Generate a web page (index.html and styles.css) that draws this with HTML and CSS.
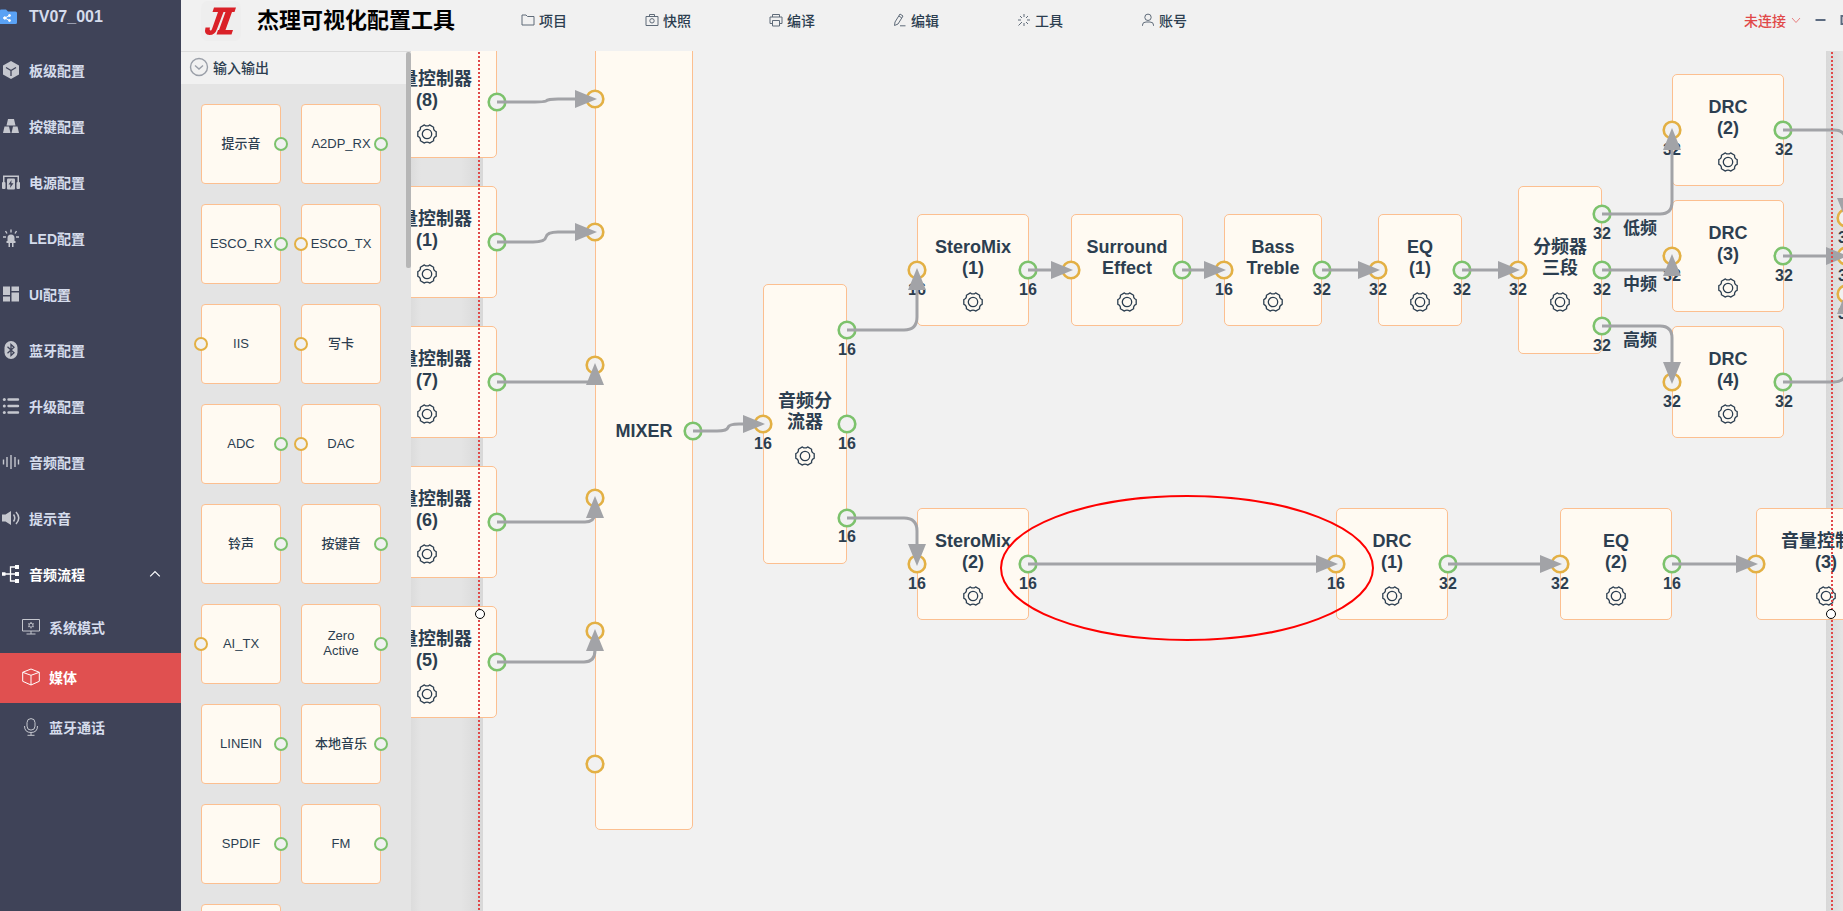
FILE: index.html
```html
<!DOCTYPE html>
<html lang="zh-CN">
<head>
<meta charset="utf-8">
<title>杰理可视化配置工具</title>
<link rel="stylesheet" href="styles.css">
</head>
<body>
<svg class="defs" aria-hidden="true">
  <symbol id="gear" viewBox="0 0 20 20"><path d="M19.2 12.3V7.7Q16.100 6.500 16.6 3.2L12.6.9Q10 3 7.4.9L3.4 3.2Q3.900 6.500.8 7.7V12.3Q3.900 13.500 3.4 16.8L7.4 19.1Q10 17 12.6 19.1L16.6 16.8Q16.100 13.500 19.2 12.3Z"/><circle cx="10" cy="10" r="4.700"/></symbol>
</svg>
<div class="app">
  <aside class="sidebar">
    <div class="project">
      <svg class="project-icon" viewBox="0 0 18 18"><path fill="#5aa2f5" d="M0 2.500Q0 1.500 1 1.500H6L8 3.500H15.500Q17 3.500 17 5V14.500Q17 16 15.500 16H0Z"/><g fill="#fff" stroke="#fff"><path fill="none" d="M9.500 7.500L5 10L9.500 12.500"/><circle cx="9.500" cy="7.500" r="1"/><circle cx="4.800" cy="10" r="1.200"/><circle cx="9.500" cy="12.500" r="1"/></g></svg>
      <span>TV07_001</span>
    </div>
    <nav class="nav">
      <a class="nav-item" href="#board"><svg class="icon" viewBox="0 0 18 18"><path fill="currentColor" d="M9 0L17 4.500V13.500L9 18L1 13.500V4.500Z"/><path fill="none" stroke="#3f4358" stroke-width="1.300" d="M4 6.500L9 9.500L14 6.500M9 9.500V15"/></svg>板级配置</a>
      <a class="nav-item" href="#key"><svg class="icon" viewBox="0 0 18 18"><path fill="currentColor" d="M6 2H12L13.500 8.500H4.500ZM2.500 9.500H7L8.500 16H1ZM11 9.500H15.500L17 16H9.500Z"/></svg>按键配置</a>
      <a class="nav-item" href="#power"><svg class="icon" viewBox="0 0 18 18"><g fill="currentColor"><path d="M1 2.500H17V9H15.500V4H2.500V9H1Z"/><rect x="0" y="9" width="3.500" height="7" rx="1"/><rect x="14.500" y="9" width="3.500" height="7" rx="1"/><rect x="5" y="5.500" width="8" height="11" rx="1"/></g><path fill="#3f4358" d="M9.500 7L6.500 11.500H8.500L8 15L11.500 10.300H9.300Z"/></svg>电源配置</a>
      <a class="nav-item" href="#led"><svg class="icon" viewBox="0 0 18 18"><path fill="currentColor" d="M5.500 12V9Q5.500 5.500 9 5.500T12.500 9V12H13.500V14H11.500V18H10V14H8V18H6.500V14H4.500V12Z"/><path stroke="currentColor" stroke-width="1.400" d="M9 .500V3.500M3.500 2L5 4.500M14.500 2L13 4.500M1 8H4M14 8H17"/></svg>LED配置</a>
      <a class="nav-item" href="#ui"><svg class="icon" viewBox="0 0 18 18"><path fill="currentColor" d="M1 1.500H8V10H1ZM9.500 1.500H17V6H9.500ZM9.500 7.500H17V16.500H9.500ZM1 11.500H8V16.500H1Z"/></svg>UI配置</a>
      <a class="nav-item" href="#bluetooth"><svg class="icon" viewBox="0 0 18 18"><rect x="2.500" y="0" width="13" height="18" rx="6.500" fill="currentColor"/><path fill="none" stroke="#3f4358" stroke-width="1.300" d="M5.500 5.800L12 11.700L9 14.500V3.500L12 6.300L5.500 12.200"/></svg>蓝牙配置</a>
      <a class="nav-item" href="#upgrade"><svg class="icon" viewBox="0 0 18 18"><path stroke="currentColor" stroke-width="2.400" stroke-linecap="round" d="M6.500 2.500H16M6.500 9H16M6.500 15.500H16"/><g fill="currentColor"><circle cx="2.300" cy="2.500" r="1.500"/><circle cx="2.300" cy="9" r="1.500"/><circle cx="2.300" cy="15.500" r="1.500"/></g></svg>升级配置</a>
      <a class="nav-item" href="#audio"><svg class="icon" viewBox="0 0 18 18"><path stroke="currentColor" stroke-width="1.400" d="M1.500 6.500V11.500M5 4V14M9 2V16M13 4V14M16.500 6.500V11.500"/></svg>音频配置</a>
      <a class="nav-item" href="#tone"><svg class="icon" viewBox="0 0 18 18"><path fill="currentColor" d="M0 5.500H3.500L9 2V16L3.500 12.500H0Z"/><path fill="none" stroke="currentColor" stroke-width="1.500" d="M11.500 5.500Q14 9 11.500 12.500M14 3Q19.500 9 14 15"/></svg>提示音</a>
      <a class="nav-item nav-item-open" href="#flow"><svg class="icon" viewBox="0 0 18 18"><path fill="none" stroke="currentColor" stroke-width="1.300" d="M2 9H15M15 2H8.500V16H15"/><path fill="currentColor" d="M0 7.300H3.500V10.700H0ZM13 0H17V4H13ZM13 7H17V11H13ZM13 14H17V18H13Z"/></svg>音频流程<svg class="caret" viewBox="0 0 10 10"><path d="M1 7L5 3L9 7"/></svg></a>
      <a class="sub-item" href="#system"><svg class="icon line" viewBox="0 0 18 18"><path d="M.500 1.500H17.500V13H.500ZM9 13V16M4.500 16H13.500"/><circle cx="9" cy="7.200" r="2"/><path d="M9 4V5M9 9.500V10.500M6.200 5.600L7 6.200M11 8.300L11.800 8.900M6.200 8.900L7 8.300M11 6.200L11.800 5.600"/></svg>系统模式</a>
      <a class="sub-item sub-item-active" href="#media"><svg class="icon line" viewBox="0 0 18 18"><path d="M9 1L17.300 4.300V13.300L9 17L.700 13.300V4.300ZM.700 4.300L9 7.300L17.300 4.300M9 7.300V17"/></svg>媒体</a>
      <a class="sub-item" href="#call"><svg class="icon line" viewBox="0 0 18 18"><rect x="5" y=".600" width="8" height="11.500" rx="4"/><path d="M2.500 8Q2.500 14.500 9 14.500T15.500 8M9 14.500V17.300M5.500 17.300H12.500"/></svg>蓝牙通话</a>
    </nav>
  </aside>
  <div class="content">
    <header class="topbar">
      <svg class="logo" viewBox="0 0 40 40"><rect width="40" height="40" rx="7" fill="#eeeeee"/><path fill="#da2128" d="M13 6.500H35L33.500 11H31L24.500 29H32L30.500 33.500H15.500L17 29H18L24.500 11H22.500L16 28Q14 34 8.500 34Q2.500 34 4.500 26.500H9Q8.200 29.500 9.500 29.500Q10.500 29.500 11 28L17 11H11.500Z"/></svg>
      <h1 class="title">杰理可视化配置工具</h1>
      <div class="menu">
        <button class="menu-item"><svg class="menu-icon" viewBox="0 0 14 14"><path d="M1 2H5L6.500 3.500H13V12H1Z"/></svg>项目</button>
        <button class="menu-item"><svg class="menu-icon" viewBox="0 0 14 14"><path d="M1 3.500H13V12.500H1ZM4.500 3.500V1.500H9.500V3.500"/><circle cx="7" cy="7.800" r="2.200"/></svg>快照</button>
        <button class="menu-item"><svg class="menu-icon" viewBox="0 0 14 14"><path d="M3.500 4V1.500H10.500V4M3.500 10.500H1V4H13V10.500H10.500M3.500 7.500H10.500V13H3.500Z"/></svg>编译</button>
        <button class="menu-item"><svg class="menu-icon" viewBox="0 0 14 14"><path d="M7 1L10 3L5 11L1.500 12.500L2 9ZM6 3L8.800 5M7 12.800H12.500"/></svg>编辑</button>
        <button class="menu-item"><svg class="menu-icon" viewBox="0 0 14 14"><path d="M7 1V4M7 10V13M1 7H4M10 7H13M3 3L5 5M11 3L9 5M11 11L9 9M5 9L1.500 12.500"/></svg>工具</button>
        <button class="menu-item"><svg class="menu-icon" viewBox="0 0 14 14"><circle cx="7" cy="4.300" r="3.200"/><path d="M1.500 12.800V12Q1.500 9 5 9H9Q12.500 9 12.500 12V12.800"/></svg>账号</button>
      </div>
      <div class="window-tools">
        <button class="status">未连接<svg class="status-caret" viewBox="0 0 10 10"><path d="M1 3L5 7.500L9 3"/></svg></button>
        <button class="window-button" aria-label="最小化"><svg viewBox="0 0 10 10"><path d="M0 5H10"/></svg></button>
        <button class="window-button" aria-label="还原"><svg viewBox="0 0 10 10"><path d="M1 1H9V9H1Z"/></svg></button>
      </div>
    </header>
    <div class="workspace">
      <section class="palette">
        <button class="palette-head"><svg class="fold" viewBox="0 0 20 20"><circle cx="10" cy="10" r="8.500"/><path d="M6 8.500L10 12L14 8.500"/></svg>输入输出</button>
        <ul class="palette-grid">
          <li class="block out">提示音</li><li class="block out">A2DP_RX</li>
          <li class="block out">ESCO_RX</li><li class="block in">ESCO_TX</li>
          <li class="block in">IIS</li><li class="block in">写卡</li>
          <li class="block out">ADC</li><li class="block in">DAC</li>
          <li class="block out">铃声</li><li class="block out">按键音</li>
          <li class="block in">AI_TX</li><li class="block out">Zero<br>Active</li>
          <li class="block out">LINEIN</li><li class="block out">本地音乐</li>
          <li class="block out">SPDIF</li><li class="block out">FM</li>
          <li class="block"></li>
        </ul>
        <div class="scroll-thumb"></div>
      </section>
      <main class="canvas">
        <div class="stage">
          <div class="margin-zone zone-left"></div>
          <div class="margin-zone zone-right"></div>
          <div class="node" style="--x:357px;--y:46px;--w:140px;--h:112px"><span>音量控制器<br>(8)</span><svg class="gear"><use href="#gear"/></svg></div>
          <div class="node" style="--x:357px;--y:186px;--w:140px;--h:112px"><span>音量控制器<br>(1)</span><svg class="gear"><use href="#gear"/></svg></div>
          <div class="node" style="--x:357px;--y:326px;--w:140px;--h:112px"><span>音量控制器<br>(7)</span><svg class="gear"><use href="#gear"/></svg></div>
          <div class="node" style="--x:357px;--y:466px;--w:140px;--h:112px"><span>音量控制器<br>(6)</span><svg class="gear"><use href="#gear"/></svg></div>
          <div class="node" style="--x:357px;--y:606px;--w:140px;--h:112px"><span>音量控制器<br>(5)</span><svg class="gear"><use href="#gear"/></svg></div>
          <div class="node plain" style="--x:595px;--y:32px;--w:98px;--h:798px">MIXER</div>
          <div class="node" style="--x:763px;--y:284px;--w:84px;--h:280px"><span>音频分<br>流器</span><svg class="gear"><use href="#gear"/></svg></div>
          <div class="node" style="--x:917px;--y:214px;--w:112px;--h:112px"><span>SteroMix<br>(1)</span><svg class="gear"><use href="#gear"/></svg></div>
          <div class="node" style="--x:1071px;--y:214px;--w:112px;--h:112px"><span>Surround<br>Effect</span><svg class="gear"><use href="#gear"/></svg></div>
          <div class="node" style="--x:1224px;--y:214px;--w:98px;--h:112px"><span>Bass<br>Treble</span><svg class="gear"><use href="#gear"/></svg></div>
          <div class="node" style="--x:1378px;--y:214px;--w:84px;--h:112px"><span>EQ<br>(1)</span><svg class="gear"><use href="#gear"/></svg></div>
          <div class="node" style="--x:1518px;--y:186px;--w:84px;--h:168px"><span>分频器<br>三段</span><svg class="gear"><use href="#gear"/></svg></div>
          <div class="node" style="--x:1672px;--y:74px;--w:112px;--h:112px"><span>DRC<br>(2)</span><svg class="gear"><use href="#gear"/></svg></div>
          <div class="node" style="--x:1672px;--y:200px;--w:112px;--h:112px"><span>DRC<br>(3)</span><svg class="gear"><use href="#gear"/></svg></div>
          <div class="node" style="--x:1672px;--y:326px;--w:112px;--h:112px"><span>DRC<br>(4)</span><svg class="gear"><use href="#gear"/></svg></div>
          <div class="node" style="--x:917px;--y:508px;--w:112px;--h:112px"><span>SteroMix<br>(2)</span><svg class="gear"><use href="#gear"/></svg></div>
          <div class="node" style="--x:1336px;--y:508px;--w:112px;--h:112px"><span>DRC<br>(1)</span><svg class="gear"><use href="#gear"/></svg></div>
          <div class="node" style="--x:1560px;--y:508px;--w:112px;--h:112px"><span>EQ<br>(2)</span><svg class="gear"><use href="#gear"/></svg></div>
          <div class="node" style="--x:1756px;--y:508px;--w:140px;--h:112px"><span>音量控制器<br>(3)</span><svg class="gear"><use href="#gear"/></svg></div>
          <svg class="wires">
            <defs>
              <marker id="arrow" markerUnits="userSpaceOnUse" markerWidth="22" markerHeight="18" refX="20" refY="9" orient="auto"><path fill="#a2a3a7" d="M0 0L22 9L0 18Z"/></marker>
            </defs>
            <g class="port-in">
              <circle cx="595" cy="99" r="8.300"/><circle cx="595" cy="232" r="8.300"/><circle cx="595" cy="365" r="8.300"/><circle cx="595" cy="498" r="8.300"/><circle cx="595" cy="631" r="8.300"/><circle cx="595" cy="764" r="8.300"/>
              <circle cx="763" cy="424" r="8.300"/><circle cx="917" cy="270" r="8.300"/><circle cx="1071" cy="270" r="8.300"/><circle cx="1224" cy="270" r="8.300"/><circle cx="1378" cy="270" r="8.300"/><circle cx="1518" cy="270" r="8.300"/>
              <circle cx="1672" cy="130" r="8.300"/><circle cx="1672" cy="256" r="8.300"/><circle cx="1672" cy="382" r="8.300"/>
              <circle cx="1846" cy="218" r="8.300"/><circle cx="1846" cy="256" r="8.300"/><circle cx="1846" cy="294" r="8.300"/>
              <circle cx="917" cy="564" r="8.300"/><circle cx="1336" cy="564" r="8.300"/><circle cx="1560" cy="564" r="8.300"/><circle cx="1756" cy="564" r="8.300"/>
            </g>
            <g class="port-out">
              <circle cx="497" cy="102" r="8.300"/><circle cx="497" cy="242" r="8.300"/><circle cx="497" cy="382" r="8.300"/><circle cx="497" cy="522" r="8.300"/><circle cx="497" cy="662" r="8.300"/>
              <circle cx="693" cy="431" r="8.300"/><circle cx="847" cy="330" r="8.300"/><circle cx="847" cy="424" r="8.300"/><circle cx="847" cy="518" r="8.300"/>
              <circle cx="1028" cy="270" r="8.300"/><circle cx="1182" cy="270" r="8.300"/><circle cx="1322" cy="270" r="8.300"/><circle cx="1462" cy="270" r="8.300"/>
              <circle cx="1602" cy="214" r="8.300"/><circle cx="1602" cy="270" r="8.300"/><circle cx="1602" cy="326" r="8.300"/>
              <circle cx="1783" cy="130" r="8.300"/><circle cx="1783" cy="256" r="8.300"/><circle cx="1783" cy="382" r="8.300"/>
              <circle cx="1028" cy="564" r="8.300"/><circle cx="1448" cy="564" r="8.300"/><circle cx="1672" cy="564" r="8.300"/>
            </g>
            <g class="port-label">
              <text x="763" y="449">16</text><text x="847" y="355">16</text><text x="847" y="449">16</text><text x="847" y="542">16</text>
              <text x="917" y="295">16</text><text x="1028" y="295">16</text><text x="1224" y="295">16</text><text x="1322" y="295">32</text><text x="1378" y="295">32</text><text x="1462" y="295">32</text><text x="1518" y="295">32</text>
              <text x="1602" y="239">32</text><text x="1602" y="295">32</text><text x="1602" y="351">32</text>
              <text x="1672" y="155">32</text><text x="1672" y="281">32</text><text x="1672" y="407">32</text><text x="1784" y="155">32</text><text x="1784" y="281">32</text><text x="1784" y="407">32</text>
              <text x="1847" y="243">32</text><text x="1847" y="281">32</text><text x="1847" y="319">32</text>
              <text x="917" y="589">16</text><text x="1028" y="589">16</text><text x="1336" y="589">16</text><text x="1448" y="589">32</text><text x="1560" y="589">32</text><text x="1672" y="589">16</text>
            </g>
            <g class="band-label">
              <text x="1640" y="234">低频</text><text x="1640" y="290">中频</text><text x="1640" y="346">高频</text>
            </g>
            <g class="edge">
              <path d="M497 102H535Q544 102 546 101Q548 99 558 99H577"/><path d="M497 242H533Q545 242 546 237T558 232H577"/>
              <path d="M497 382H590"/><path d="M497 522H585Q594 522 595 514"/><path d="M497 662H584Q595 662 595 650V645"/>
              <path d="M693 431H717Q727 431 728 427.500T739 424H745"/>
              <path d="M847 330H904Q917 330 917 317V285"/><path d="M847 518H904Q917 518 917 531V546"/>
              <path d="M1028 270H1053"/><path d="M1182 270H1206"/><path d="M1322 270H1360"/><path d="M1462 270H1500"/>
              <path d="M1602 214H1660Q1672 214 1672 202V145"/><path d="M1602 270H1666"/><path d="M1602 326H1660Q1672 326 1672 338V364"/>
              <path d="M1783 130H1834Q1846 130 1846 142V200"/><path d="M1783 256H1828"/><path d="M1783 382H1834Q1846 382 1846 370V312"/>
              <path d="M1028 564H1318"/><path d="M1448 564H1542"/><path d="M1672 564H1738"/>
            </g>
            <g class="head">
              <path d="M576 99H595"/><path d="M576 232H595"/><path d="M595 384V365"/><path d="M595 517V498"/><path d="M595 650V631"/>
              <path d="M744 424H763"/><path d="M917 289V270"/><path d="M917 545V564"/><path d="M1052 270H1071"/><path d="M1205 270H1224"/><path d="M1359 270H1378"/><path d="M1499 270H1518"/>
              <path d="M1672 149V130"/><path d="M1672 275V256"/><path d="M1672 363V382"/>
              <path d="M1846 199V218"/><path d="M1827 256H1846"/><path d="M1846 313V294"/>
              <path d="M1317 564H1336"/><path d="M1541 564H1560"/><path d="M1737 564H1756"/>
            </g>
            <path class="guide" d="M479 52V2000"/><path class="guide" d="M1832 52V2000"/>
            <circle class="handle" cx="480" cy="614" r="4.500"/><circle class="handle" cx="1831" cy="614" r="4.500"/>
            <ellipse class="highlight" cx="1187" cy="568" rx="186" ry="72"/>
          </svg>
        </div>
      </main>
    </div>
  </div>
</div>
</body>
</html>
```
FILE: styles.css
```css
*, *::after { box-sizing: border-box; }

body {
  margin: 0;
  background: #f1f1f1;
  color: #2c3e50;
  font-family: "Liberation Sans", "Noto Sans CJK SC", sans-serif;
  font-size: 14px;
  font-weight: 500;
}

button {
  margin: 0;
  padding: 0;
  border: 0;
  background: none;
  color: inherit;
  font: inherit;
}

.defs { position: absolute; width: 0; height: 0; }

.app { display: flex; height: 100vh; overflow: hidden; }

/* Sidebar */
.sidebar {
  flex: 0 0 181px;
  background: #3f4358;
  color: #d5dcec;
  font-weight: bold;
}
.project {
  display: flex;
  align-items: center;
  gap: 11px;
  height: 34px;
  margin-bottom: 9px;
  font-size: 16px;
}
.project-icon { width: 18px; height: 18px; }
.nav-item, .sub-item {
  display: flex;
  align-items: center;
  gap: 9px;
  color: inherit;
  text-decoration: none;
}
.nav-item { height: 56px; padding: 0 20px 2px 2px; }
.sub-item { height: 50px; padding: 0 0 2px 22px; }
.nav-item-open, .sub-item-active { color: #fff; }
.sub-item-active { background: #e05050; }
.icon { flex: none; width: 18px; height: 18px; color: #c5c7ce; }
.nav-item-open .icon, .sub-item-active .icon { color: #fff; }
.line { fill: none; stroke: currentColor; }
.caret { width: 12px; height: 12px; margin-left: auto; fill: none; stroke: #fff; }

/* Header */
.content { display: flex; flex: 1; flex-direction: column; min-width: 0; }
.topbar {
  display: flex;
  flex: 0 0 51px;
  align-items: flex-start;
  padding-left: 20px;
  overflow: hidden;
}
.logo { flex: none; width: 40px; height: 40px; margin-top: 1px; }
.title {
  width: 260px;
  margin: 0 0 0 16px;
  color: #000;
  font-size: 22px;
  line-height: 42px;
  white-space: nowrap;
}
.menu { display: flex; }
.menu-item {
  display: flex;
  align-items: center;
  gap: 4px;
  width: 124px;
  height: 40px;
  padding-left: 4px;
}
.menu-icon { width: 14px; height: 14px; fill: none; stroke: #5f6b79; }
.window-tools {
  display: flex;
  align-items: center;
  gap: 14px;
  height: 40px;
  margin-left: auto;
  margin-right: -8px;
}
.status { display: flex; align-items: center; gap: 5px; color: #e04848; }
.status-caret { width: 10px; height: 10px; fill: none; stroke: #e88080; }
.window-button { display: flex; }
.window-button svg { width: 11px; height: 10px; fill: none; stroke: #5c6b80; stroke-width: 2; }

/* Palette */
.workspace { display: flex; flex: 1; min-height: 0; }
.palette {
  position: relative;
  flex: 0 0 230px;
  overflow: hidden;
  border-top: 1px solid #dcdcdc;
  background: #e4e4e4;
}
.palette-head {
  display: flex;
  align-items: center;
  gap: 4px;
  width: 100%;
  height: 32px;
  padding: 0 0 2px 8px;
  background: #f1f1f1;
}
.fold { width: 20px; height: 20px; fill: none; stroke: #9a9fa8; stroke-width: 1.4; }
.palette-grid {
  display: grid;
  grid-template-columns: 80px 80px;
  grid-auto-rows: 80px;
  gap: 20px;
  margin: 0;
  padding: 20px;
  list-style: none;
}
.block {
  position: relative;
  display: flex;
  align-items: center;
  justify-content: center;
  padding-bottom: 2px;
  border: 1px solid #fcbf90;
  border-radius: 4px;
  background: #fffaf2;
  font-size: 13px;
  line-height: 15px;
  text-align: center;
}
.in::after, .out::after {
  content: "";
  position: absolute;
  top: 32px;
  width: 14px;
  height: 14px;
  border: 2px solid #7cc26c;
  border-radius: 50%;
  background: #f1f1f1;
}
.out::after { right: -8px; }
.in::after { left: -8px; border-color: #e3b044; }
.scroll-thumb {
  position: absolute;
  top: 0;
  right: 0;
  width: 5px;
  height: 216px;
  border-radius: 2px;
  background: #b6b6b6;
}

/* Canvas */
.canvas { position: relative; flex: 1; min-width: 0; overflow: hidden; }
.stage { position: absolute; top: -51px; right: 0; bottom: 0; left: -411px; }
.margin-zone { position: absolute; top: 0; bottom: 0; }
.zone-left {
  left: 411px;
  width: 72px;
  background: linear-gradient(to right, #dcdcdc, #e4e4e4 10px, #e4e4e4 50px, #d8d8d8);
}
.zone-right {
  left: 1826px;
  width: 400px;
  background: linear-gradient(to right, #d8d8d8, #e4e4e4 16px);
}
.node {
  position: absolute;
  top: var(--y);
  left: var(--x);
  display: flex;
  flex-direction: column;
  align-items: center;
  justify-content: center;
  width: var(--w);
  height: var(--h);
  padding-top: 9px;
  border: 1px solid #fcbf90;
  border-radius: 5px;
  background: #fffaf2;
  font-size: 18px;
  font-weight: bold;
  line-height: 21px;
  text-align: center;
  white-space: nowrap;
}
.plain { padding-top: 0; }
.gear {
  flex: none;
  width: 20px;
  height: 20px;
  margin-top: 13px;
  fill: none;
  stroke: #2c3e50;
  stroke-width: 1.3;
  stroke-linejoin: round;
}
.wires {
  position: absolute;
  top: 0;
  left: 0;
  width: 100%;
  height: 100%;
}
.port-in, .port-out { fill: #f1f1f1; stroke-width: 2.6; }
.port-in { stroke: #e3b044; }
.port-out { stroke: #7cc26c; }
.port-label, .band-label { fill: #2c3e50; font-size: 16px; font-weight: bold; text-anchor: middle; }
.band-label { font-size: 17px; }
.edge { fill: none; stroke: #a2a3a7; stroke-width: 3; }
.head { fill: none; stroke: none; }
.head path { marker-end: url(#arrow); }
.guide { fill: none; stroke: #e04848; stroke-width: 2; stroke-dasharray: 2 2; }
.handle { fill: #fff; stroke: #000; }
.highlight { fill: none; stroke: #f00; stroke-width: 2; }
```
